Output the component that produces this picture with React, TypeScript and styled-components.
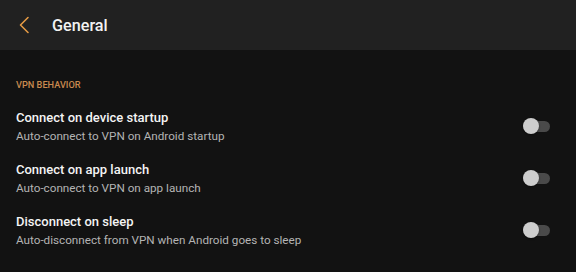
import React, { useState } from 'react'
import styled, { createGlobalStyle } from 'styled-components'

const GlobalStyle = createGlobalStyle`
  html, body {
    margin: 0;
    padding: 0;
    background: #121212;
  }
  body {
    font-family: Roboto, "Noto Sans", "Liberation Sans", sans-serif;
    -webkit-font-smoothing: antialiased;
  }
`

const Screen = styled.div`
  width: 576px;
  height: 272px;
  background: #121212;
  display: flex;
  flex-direction: column;
  overflow: hidden;
`

const TopBar = styled.header`
  height: 50px;
  flex-shrink: 0;
  background: #212121;
  display: flex;
  align-items: center;
  padding-left: 17px;
  gap: 21px;
`

const BackButton = styled.button`
  width: 14px;
  height: 20px;
  padding: 0;
  border: 0;
  background: none;
  display: flex;
  align-items: center;
  justify-content: center;
  color: #e39a45;
  cursor: pointer;
`

const Title = styled.h1`
  margin: 0;
  color: #f2f2f2;
  font-size: 16.2px;
  font-weight: 500;
`

const Section = styled.section`
  display: flex;
  flex-direction: column;
  padding-top: 29px;
`

const SectionLabel = styled.div`
  padding-left: 16px;
  color: #c98a4f;
  font-size: 9.2px;
  line-height: 12px;
  font-weight: 500;
  margin-bottom: 19px;
`

const Row = styled.div`
  display: flex;
  align-items: center;
  justify-content: space-between;
  padding: 0 26px 0 16px;
  height: 52px;
`

const RowText = styled.div`
  display: flex;
  flex-direction: column;
  gap: 3px;
  margin-top: -20px;
`

const RowTitle = styled.div`
  color: #f4f4f4;
  font-size: 13px;
  line-height: 16px;
  font-weight: 500;
`

const RowSubtitle = styled.div`
  color: #b4b4b4;
  font-size: 11.7px;
  line-height: 14px;
`

const SwitchTrack = styled.button<{ on: boolean }>`
  position: relative;
  width: 27px;
  height: 11px;
  padding: 0;
  border: 0;
  border-radius: 6px;
  background: ${({ on }) => (on ? '#8a5a2b' : '#4a4a4a')};
  margin-top: -20px;
  cursor: pointer;
`

const SwitchThumb = styled.span<{ on: boolean }>`
  position: absolute;
  top: -3px;
  left: ${({ on }) => (on ? '11px' : '0')};
  width: 16px;
  height: 16px;
  border-radius: 50%;
  background: ${({ on }) => (on ? '#e39a45' : '#cdcdcd')};
  box-shadow: 0 1px 2px rgba(0, 0, 0, 0.4);
`

const Chevron = () => (
  <svg width="12" height="18" viewBox="0 0 12 18" fill="none">
    <path d="M10 1.5 L2.5 9 L10 16.5" stroke="currentColor" strokeWidth="1.6" strokeLinecap="round" strokeLinejoin="round" />
  </svg>
)

const settings = [
  { title: 'Connect on device startup', subtitle: 'Auto-connect to VPN on Android startup' },
  { title: 'Connect on app launch', subtitle: 'Auto-connect to VPN on app launch' },
  { title: 'Disconnect on sleep', subtitle: 'Auto-disconnect from VPN when Android goes to sleep' },
]

const App = () => {
  const [values, setValues] = useState([false, false, false])

  const toggle = (i: number) => {
    setValues((v) => v.map((x, j) => (j === i ? !x : x)))
  }

  return (
    <Screen>
      <GlobalStyle />
      <TopBar>
        <BackButton aria-label="Back">
          <Chevron />
        </BackButton>
        <Title>General</Title>
      </TopBar>
      <Section>
        <SectionLabel>VPN BEHAVIOR</SectionLabel>
        {settings.map((s, i) => (
          <Row key={s.title}>
            <RowText>
              <RowTitle>{s.title}</RowTitle>
              <RowSubtitle>{s.subtitle}</RowSubtitle>
            </RowText>
            <SwitchTrack on={values[i]} onClick={() => toggle(i)}>
              <SwitchThumb on={values[i]} />
            </SwitchTrack>
          </Row>
        ))}
      </Section>
    </Screen>
  )
}

export default App
